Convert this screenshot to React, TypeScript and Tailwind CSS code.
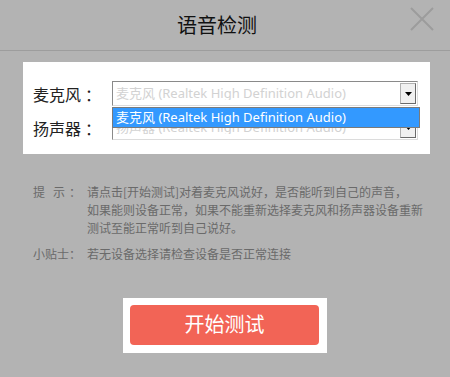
const cjk = "font-['Noto_Sans','Noto_Sans_CJK_SC',sans-serif]";

function FakeSelect({ text }: { text: string }) {
  return (
    <div className="flex h-[25px] w-[306px] items-center border border-[#8a8a8a] border-b-[#dcdcdc] border-r-[#dcdcdc] bg-white">
      <span className="flex-1 truncate pl-[3px] text-[13px] leading-none text-[#d2d2d2]">{text}</span>
      <div className="mr-[1px] flex h-[21px] w-[16px] items-center justify-center border border-[#b0b0b0] border-r-[#6a6a6a] border-b-[#6a6a6a] bg-[#f0f0f0]">
        <svg width="7" height="4" viewBox="0 0 7 4">
          <path d="M0 0h7L3.5 4z" fill="#000" />
        </svg>
      </div>
    </div>
  );
}

function Label({ text }: { text: string }) {
  return (
    <span className="flex w-[79px] text-[16px] text-[#222] font-['Noto_Sans_CJK_SC',sans-serif]">
      {text}
      <span className="ml-[4px]">：</span>
    </span>
  );
}

export default function App() {
  return (
    <div className={`relative h-[377px] w-[450px] overflow-hidden bg-[#b3b3b3] ${cjk}`}>
      <header className="flex h-[51px] items-center justify-center border-b border-[#9d9d9d] pr-[16px]">
        <h1 className="text-[20px] leading-none text-[#111] font-['Noto_Sans_CJK_SC',sans-serif]">语音检测</h1>
      </header>
      <button className="absolute left-[410px] top-[7px] h-[24px] w-[24px]">
        <svg width="24" height="24" viewBox="0 0 24 24">
          <path d="M1 1L23 23M23 1L1 23" stroke="#9c9c9c" strokeWidth="2" />
        </svg>
      </button>

      <section className="relative ml-[23px] mt-[11px] flex h-[92px] w-[407px] flex-col gap-[9px] bg-white pl-[10px] pt-[19px]">
        <div className="flex items-center">
          <Label text="麦克风" />
          <FakeSelect text="麦克风 (Realtek High Definition Audio)" />
        </div>
        <div className="flex items-center">
          <Label text="扬声器" />
          <FakeSelect text="扬声器 (Realtek High Definition Audio)" />
        </div>
        {/* open dropdown list of the first select */}
        <div className="absolute left-[89px] top-[45px] flex h-[21px] w-[308px] items-center border border-[#7a7a7a] bg-[#3399ff] pl-[3px] text-[13px] leading-none text-white">
          麦克风 (Realtek High Definition Audio)
        </div>
      </section>

      <div className="ml-[33px] mt-[29px] flex flex-col gap-[8px] text-[12px] leading-[18px] text-[#6a6a6a] font-['Noto_Sans_CJK_SC',sans-serif]">
        <div className="flex">
          <span className="flex w-[54px] shrink-0">
            <span className="mr-[8px]">提</span>
            <span className="mr-[4px]">示</span>
            <span>：</span>
          </span>
          <p className="whitespace-nowrap">
            请点击[开始测试]对着麦克风说好，是否能听到自己的声音，
            <br />
            如果能则设备正常，如果不能重新选择麦克风和扬声器设备重新
            <br />
            测试至能正常听到自己说好。
          </p>
        </div>
        <div className="flex">
          <span className="w-[54px] shrink-0">小贴士：</span>
          <p>若无设备选择请检查设备是否正常连接</p>
        </div>
      </div>

      <div className="mx-auto mt-[35px] w-[204px] bg-white pb-[8px] pl-[7px] pr-[8px] pt-[7px]">
        <button className="flex h-[40px] w-full items-center justify-center rounded-[4px] bg-[#f26456] text-[20px] leading-none text-white">
          开始测试
        </button>
      </div>
    </div>
  );
}
